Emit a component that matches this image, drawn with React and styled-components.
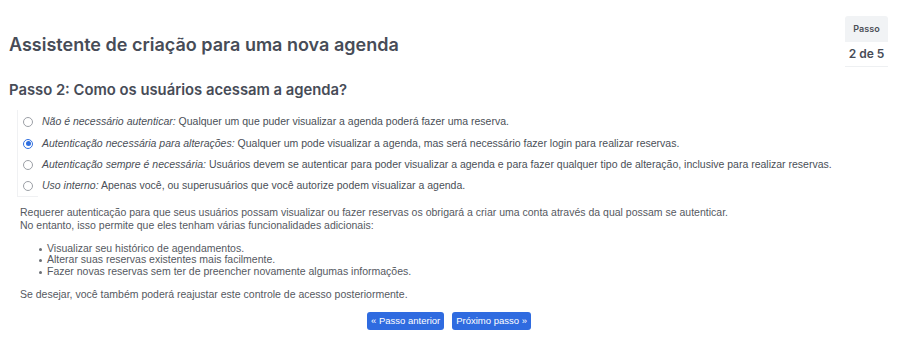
import React from "react";
import styled, { createGlobalStyle } from "styled-components";

const Global = createGlobalStyle`
  html, body { margin: 0; padding: 0; background: #fff; }
  body { font-family: "Liberation Sans", Arial, sans-serif; color: #4a4f57; }
`;

const Page = styled.div`
  width: 900px;
  height: 346px;
  box-sizing: border-box;
  padding: 16px 12px 0 9px;
  overflow: hidden;
`;

const Header = styled.div`
  display: flex;
  justify-content: space-between;
  align-items: flex-start;
`;

const Title = styled.h1`
  margin: 18px 0 0;
  font-family: Inter, "Liberation Sans", sans-serif;
  font-size: 18px;
  line-height: 22px;
  font-weight: 600;
  color: #474c57;
`;

const StepBox = styled.div`
  width: 43px;
  display: flex;
  flex-direction: column;
  align-items: stretch;
  font-family: Inter, "Liberation Sans", sans-serif;
  text-align: center;
  border-bottom: 1px solid #eef0f2;
`;

const StepHead = styled.div`
  background: #f1f3f5;
  border-radius: 3px 3px 0 0;
  height: 26px;
  line-height: 26px;
  font-size: 9px;
  font-weight: 600;
  color: #4a4f57;
`;

const StepValue = styled.div`
  height: 24px;
  line-height: 24px;
  font-size: 12px;
  font-weight: 600;
  color: #474c57;
`;

const Subtitle = styled.h2`
  margin: 13px 0 0;
  font-family: Inter, "Liberation Sans", sans-serif;
  font-size: 14.8px;
  line-height: 20px;
  font-weight: 600;
  color: #474c57;
`;

const Options = styled.table`
  margin: 10px 0 0 8px;
  border-collapse: collapse;
  font-size: 10.5px;
  color: #4a4f57;
`;

const OptionRow = styled.tr`
  height: ${(p) => p.$h}px;
`;

const RadioCell = styled.td`
  width: 20px;
  padding: 0;
  text-align: center;
  vertical-align: middle;
  border-left: 1px solid #f0f1f3;
  border-bottom: ${(p) => (p.$last ? "1px solid #f0f1f3" : "none")};
`;

const Radio = styled.span`
  display: inline-block;
  width: 8px;
  height: 8px;
  border-radius: 50%;
  border: 1px solid ${(p) => (p.$checked ? "#2f6fe0" : "#9ca0a6")};
  background: #fff;
  position: relative;
  vertical-align: middle;
  &::after {
    content: "";
    display: ${(p) => (p.$checked ? "block" : "none")};
    position: absolute;
    left: 1.5px;
    top: 1.5px;
    width: 5px;
    height: 5px;
    border-radius: 50%;
    background: #2f6fe0;
  }
`;

const TextCell = styled.td`
  padding: 0 0 0 4px;
  vertical-align: middle;
  white-space: nowrap;
`;

const Label = styled.em`
  font-style: italic;
`;

const Para = styled.p`
  margin: ${(p) => p.$m || "0"};
  padding-left: 11px;
  font-size: 10.5px;
  line-height: 13px;
  color: #55595f;
`;

const List = styled.ul`
  margin: 11px 0 0;
  padding-left: 38px;
  font-size: 10.5px;
  line-height: 11.6px;
  color: #55595f;
  list-style: none;
`;

const Item = styled.li`
  position: relative;
  &::before {
    content: "";
    position: absolute;
    left: -8px;
    top: 5px;
    width: 3px;
    height: 3px;
    border-radius: 50%;
    background: #6b6f75;
  }
`;

const Buttons = styled.div`
  display: flex;
  justify-content: center;
  gap: 8px;
  margin-top: 11px;
  padding-left: 1px;
`;

const Button = styled.button`
  height: 18px;
  padding: 0 4px;
  border: none;
  border-radius: 3px;
  background: #2f6be0;
  color: #fff;
  font-family: "Liberation Sans", Arial, sans-serif;
  font-size: 9.5px;
  line-height: 18px;
  cursor: pointer;
`;

const options = [
  {
    label: "Não é necessário autenticar:",
    text: " Qualquer um que puder visualizar a agenda poderá fazer uma reserva.",
    h: 22,
  },
  {
    label: "Autenticação necessária para alterações:",
    text: " Qualquer um pode visualizar a agenda, mas será necessário fazer login para realizar reservas.",
    checked: true,
    h: 21,
  },
  {
    label: "Autenticação sempre é necessária:",
    text: " Usuários devem se autenticar para poder visualizar a agenda e para fazer qualquer tipo de alteração, inclusive para realizar reservas.",
    h: 21,
  },
  {
    label: "Uso interno:",
    text: " Apenas você, ou superusuários que você autorize podem visualizar a agenda.",
    h: 22,
  },
];

export default function App() {
  return (
    <Page>
      <Global />
      <Header>
        <Title>Assistente de criação para uma nova agenda</Title>
        <StepBox>
          <StepHead>Passo</StepHead>
          <StepValue>2 de 5</StepValue>
        </StepBox>
      </Header>
      <Subtitle>Passo 2: Como os usuários acessam a agenda?</Subtitle>
      <Options>
        <tbody>
          {options.map((o, i) => (
            <OptionRow key={i} $h={o.h}>
              <RadioCell $last={i === options.length - 1}>
                <Radio $checked={o.checked} />
              </RadioCell>
              <TextCell>
                <Label>{o.label}</Label>
                {o.text}
              </TextCell>
            </OptionRow>
          ))}
        </tbody>
      </Options>
      <Para $m="9px 0 0">
        Requerer autenticação para que seus usuários possam visualizar ou fazer reservas os obrigará a criar uma conta através da qual possam se autenticar.
        <br />
        No entanto, isso permite que eles tenham várias funcionalidades adicionais:
      </Para>
      <List>
        <Item>Visualizar seu histórico de agendamentos.</Item>
        <Item>Alterar suas reservas existentes mais facilmente.</Item>
        <Item>Fazer novas reservas sem ter de preencher novamente algumas informações.</Item>
      </List>
      <Para $m="11px 0 0">Se desejar, você também poderá reajustar este controle de acesso posteriormente.</Para>
      <Buttons>
        <Button>« Passo anterior</Button>
        <Button>Próximo passo »</Button>
      </Buttons>
    </Page>
  );
}
